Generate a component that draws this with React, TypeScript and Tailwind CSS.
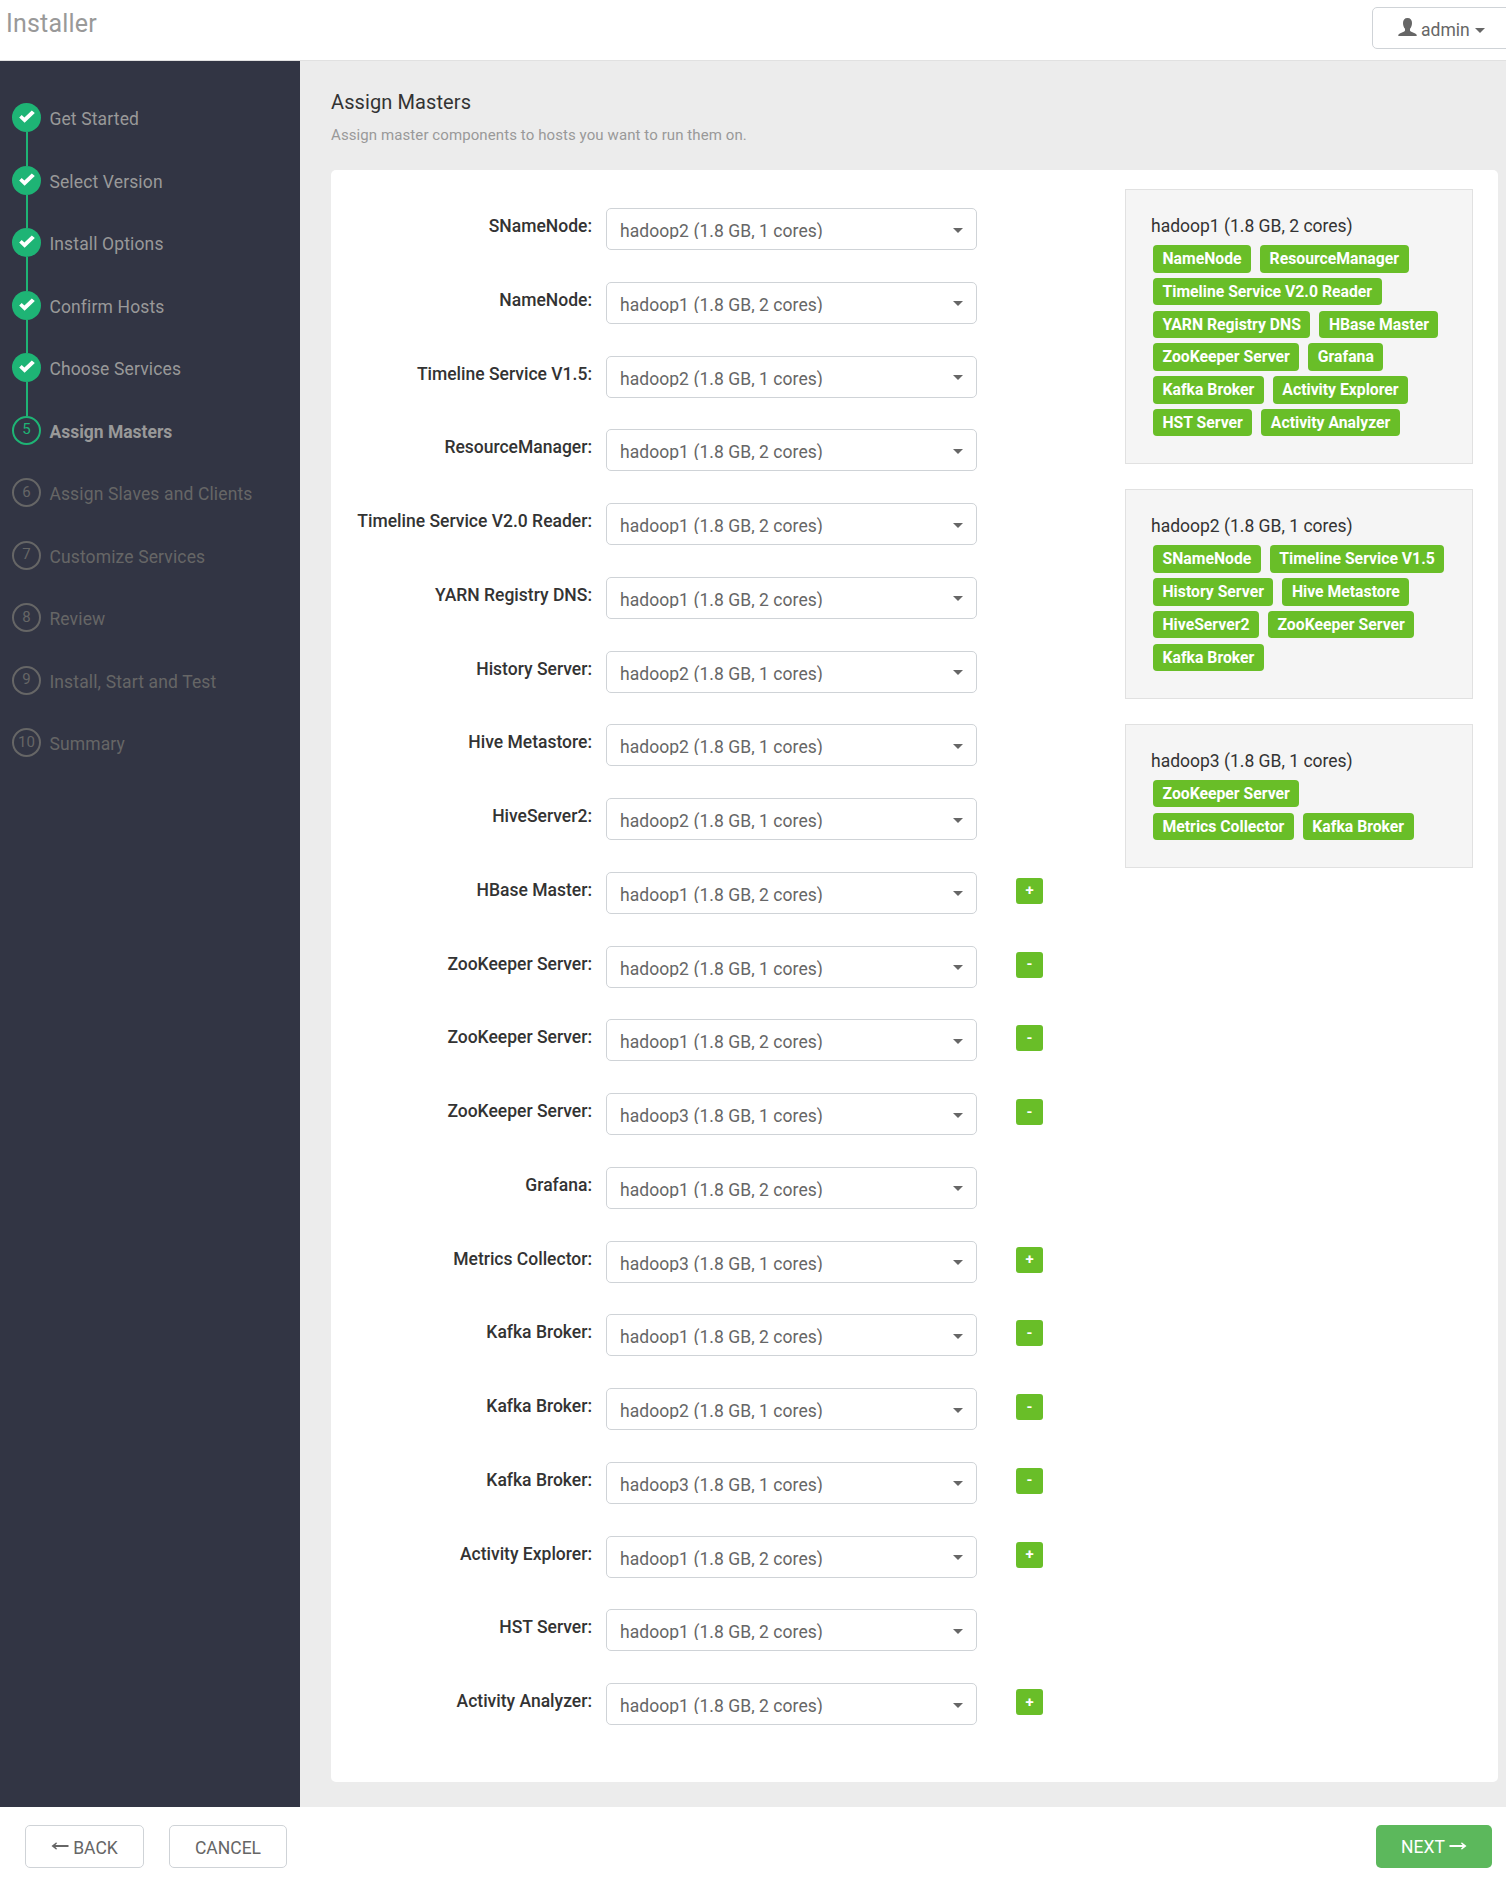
const steps = [
  'Get Started',
  'Select Version',
  'Install Options',
  'Confirm Hosts',
  'Choose Services',
  'Assign Masters',
  'Assign Slaves and Clients',
  'Customize Services',
  'Review',
  'Install, Start and Test',
  'Summary',
];

const CURRENT = 5;

const H1 = 'hadoop1 (1.8 GB, 2 cores)';
const H2 = 'hadoop2 (1.8 GB, 1 cores)';
const H3 = 'hadoop3 (1.8 GB, 1 cores)';

const masters: [string, string, string?][] = [
  ['SNameNode', H2],
  ['NameNode', H1],
  ['Timeline Service V1.5', H2],
  ['ResourceManager', H1],
  ['Timeline Service V2.0 Reader', H1],
  ['YARN Registry DNS', H1],
  ['History Server', H2],
  ['Hive Metastore', H2],
  ['HiveServer2', H2],
  ['HBase Master', H1, '+'],
  ['ZooKeeper Server', H2, '-'],
  ['ZooKeeper Server', H1, '-'],
  ['ZooKeeper Server', H3, '-'],
  ['Grafana', H1],
  ['Metrics Collector', H3, '+'],
  ['Kafka Broker', H1, '-'],
  ['Kafka Broker', H2, '-'],
  ['Kafka Broker', H3, '-'],
  ['Activity Explorer', H1, '+'],
  ['HST Server', H1],
  ['Activity Analyzer', H1, '+'],
];

const hosts: { name: string; rows: string[][] }[] = [
  {
    name: H1,
    rows: [
      ['NameNode', 'ResourceManager'],
      ['Timeline Service V2.0 Reader'],
      ['YARN Registry DNS', 'HBase Master'],
      ['ZooKeeper Server', 'Grafana'],
      ['Kafka Broker', 'Activity Explorer'],
      ['HST Server', 'Activity Analyzer'],
    ],
  },
  {
    name: H2,
    rows: [
      ['SNameNode', 'Timeline Service V1.5'],
      ['History Server', 'Hive Metastore'],
      ['HiveServer2', 'ZooKeeper Server'],
      ['Kafka Broker'],
    ],
  },
  { name: H3, rows: [['ZooKeeper Server'], ['Metrics Collector', 'Kafka Broker']] },
];

function Caret({ className = '' }: { className?: string }) {
  return (
    <svg className={className} width="10" height="5" viewBox="0 0 10 5" fill="#666">
      <path d="M0 0h10L5 5z" />
    </svg>
  );
}

function Check() {
  return (
    <svg width="16" height="14" viewBox="0 0 16 14" fill="#fff" className="relative left-[0.5px] top-[-0.5px]">
      <path d="M0.2 7.6 2.7 5.1 5.4 7.4 12.8 0.4 15.8 3 5.6 12.8z" />
    </svg>
  );
}

function Arrow({ flip = false, className = '' }: { flip?: boolean; className?: string }) {
  return (
    <svg
      width="18"
      height="8"
      viewBox="0 0 18 8"
      fill="currentColor"
      className={flip ? `-scale-x-100 ${className}` : className}
    >
      <path d="M0.5 3.1H13.6L11.8 0.9 13 0.5 17.5 4 13 7.5 11.8 7.1 13.6 4.9H0.5z" />
    </svg>
  );
}

function Step({ label, index }: { label: string; index: number }) {
  const done = index < CURRENT;
  const current = index === CURRENT;
  return (
    <li className="flex h-[62.5px] items-start">
      <div className="flex h-full w-[29px] flex-col items-center">
        {done ? (
          <div className="flex h-[29px] w-[29px] shrink-0 items-center justify-center rounded-full bg-[#1eb475]">
            <Check />
          </div>
        ) : (
          <div
            className={`flex h-[29px] w-[29px] shrink-0 items-center justify-center rounded-full border-2 pb-px text-[15px] leading-none ${
              current ? 'border-[#1eb475] text-[#1eb475]' : 'border-[#666] text-[#666]'
            }`}
          >
            {index}
          </div>
        )}
        {done && <div className="ml-px w-[2px] grow bg-[#1eb475]" />}
      </div>
      <span
        className={`ml-[8.4px] mt-[4px] text-[17.5px] leading-[25px] ${
          done
            ? 'tracking-[0.14px] text-[#999]'
            : current
              ? 'font-bold text-[#999]'
              : 'tracking-[0.14px] text-[#666]'
        }`}
      >
        {label}
      </span>
    </li>
  );
}

function MasterRow({ label, host, action }: { label: string; host: string; action?: string }) {
  return (
    <div className="flex h-[73.75px] items-start">
      <div className="mt-[6px] w-[261px] whitespace-nowrap text-right text-[17.5px] font-medium leading-[25px] text-[#333]">
        {label}:
      </div>
      <div className="ml-[14px] flex h-[42px] w-[371px] items-center justify-between rounded-[5px] border border-[#cfd3d7] bg-white pl-[13px] pr-[13px]">
        <span className="mt-[1px] h-[19px] overflow-hidden text-[17.5px] leading-[22px] tracking-[0.05px] text-[#666]">
          {host}
        </span>
        <Caret className="mt-[2px]" />
      </div>
      {action && (
        <button className="ml-[39px] mt-[6px] flex h-[26px] w-[27px] items-center justify-center rounded-[3px] bg-[#69be28] text-[15px] font-bold leading-none text-white">
          {action}
        </button>
      )}
    </div>
  );
}

export default function App() {
  return (
    <div className="flex h-[1885px] w-[1506px] flex-col overflow-hidden bg-white font-['Roboto',sans-serif] text-[17.5px] text-[#333]">
      <header className="flex h-[61px] shrink-0 items-start justify-between border-b border-[#e1e1e1]">
        <h1 className="ml-[6px] mt-[9px] text-[25px] leading-[30px] tracking-[0.2px] text-[#999]">Installer</h1>
        <button className="-mr-[6px] mt-[7px] flex h-[42px] w-[140px] items-center rounded-[5px] border border-[#cfd3d7] bg-white pl-[25px] text-[#666]">
          <svg width="19" height="18" viewBox="0 0 19 18" fill="#666" className="-mt-[3px]">
            <path d="M9.5 0C12.5 0 14 2 14 5c0 2.400-.8 4.500-2 5.700v1.700c0 .5.3.8.8 1l4.400 2c1 .5 1.500 1.100 1.500 2.100V18H.3v-.5c0-1 .5-1.600 1.500-2.100l4.400-2c.5-.2.800-.5.800-1v-1.700C5.800 9.500 5 7.400 5 5c0-3 1.500-5 4.500-5z" />
          </svg>
          <span className="ml-[4px] mt-[5px] leading-[25px]">admin</span>
          <Caret className="ml-[5px] mt-[5px]" />
        </button>
      </header>

      <div className="flex h-[1746px] shrink-0">
        <aside className="w-[300px] shrink-0 bg-[#323544] pl-[12px] pt-[42px]">
          <ol>
            {steps.map((label, i) => (
              <Step key={label} label={label} index={i} />
            ))}
          </ol>
        </aside>

        <main className="grow bg-[#ececec] pl-[31px] pr-[8px] pt-[28px]">
          <h2 className="text-[20px] leading-[26px] tracking-[0.1px]">Assign Masters</h2>
          <p className="mt-[8px] text-[15px] leading-[24px] tracking-[0.093px] text-[#999]">
            Assign master components to hosts you want to run them on.
          </p>
          <section className="mt-[23px] flex h-[1612px] items-start rounded-[5px] bg-white">
            <div className="w-[794px] shrink-0 pt-[38px]">
              {masters.map(([label, host, action], i) => (
                <MasterRow key={i} label={label} host={host} action={action} />
              ))}
            </div>
            <div className="flex w-[348px] flex-col gap-[25px] pt-[19px]">
              {hosts.map((h) => (
                <div key={h.name} className="border border-[#e1e1e1] bg-[#f5f5f5] pb-[21.5px] pl-[25px] pt-[24px]">
                  <div className="leading-[25px]">{h.name}</div>
                  <div className="ml-[2px] mt-[6px]">
                    {h.rows.map((row) => (
                      <div key={row.join()} className="flex h-[32.8px] items-start gap-[9px]">
                        {row.map((c) => (
                          <span
                            key={c}
                            className="h-[27.5px] whitespace-nowrap rounded-[4px] bg-[#69be28] px-[9.5px] text-[15.75px] font-bold leading-[27.5px] text-white"
                          >
                            {c}
                          </span>
                        ))}
                      </div>
                    ))}
                  </div>
                </div>
              ))}
            </div>
          </section>
        </main>
      </div>

      <footer className="flex grow items-start pl-[25px] pr-[14px] pt-[18px]">
        <button className="flex h-[43px] w-[119px] items-center justify-center rounded-[5px] border border-[#cfd3d7] text-[#666]">
          <Arrow flip className="-mt-[2px]" />
          <span className="ml-[4px] mt-[4px]">BACK</span>
        </button>
        <button className="ml-[25px] flex h-[43px] w-[118px] items-center justify-center rounded-[5px] border border-[#cfd3d7] text-[#666]">
          <span className="mt-[4px]">CANCEL</span>
        </button>
        <button className="ml-auto flex h-[43px] w-[116px] items-center justify-center rounded-[5px] bg-[#5cb85c] text-white">
          <span className="mt-[2px]">NEXT</span>
          <Arrow className="-mt-[2px] ml-[4px]" />
        </button>
      </footer>
    </div>
  );
}
